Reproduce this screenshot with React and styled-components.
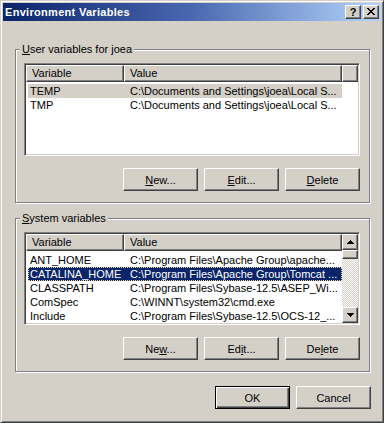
import React from 'react';
import styled, {createGlobalStyle, css} from 'styled-components';

const face = '#d4d0c8';

const GlobalStyle = createGlobalStyle`
    html, body {
        margin: 0;
        padding: 0;
        background: ${face};
    }
    body {
        font-family: "Liberation Sans", Arial, sans-serif;
        font-size: 11px;
        color: #000;
    }
    * {
        box-sizing: border-box;
    }
`

const raised = css`
    border: 1px solid;
    border-color: #fff #404040 #404040 #fff;
    box-shadow: inset -1px -1px #808080, inset 1px 1px ${face};
`

const Window = styled.div`
    width: 384px;
    height: 423px;
    background: ${face};
    border: 1px solid;
    border-color: ${face} #404040 #404040 ${face};
    box-shadow: inset 1px 1px #fff, inset -1px -1px #808080;
    padding: 2px;
    display: flex;
    flex-direction: column;
`

const TitleBar = styled.div`
    height: 18px;
    display: flex;
    align-items: center;
    gap: 2px;
    padding: 0 2px 0 2px;
    background: linear-gradient(to right, #0a246a 0%, #4a68b0 50%, #b4d6fc 100%);
`

const Title = styled.div`
    flex: 1;
    color: #fff;
    font-weight: bold;
    font-size: 11px;
    letter-spacing: 0.3px;
    line-height: 18px;
    white-space: nowrap;
`

const CaptionButton = styled.div`
    ${raised};
    width: 16px;
    height: 14px;
    background: ${face};
    display: flex;
    align-items: center;
    justify-content: center;
    font-weight: bold;
    font-size: 11px;
    line-height: 12px;
    padding-bottom: 1px;
`

const Content = styled.div`
    flex: 1;
    padding: 28px 11px 0 12px;
    display: flex;
    flex-direction: column;
`

const Group = styled.div`
    position: relative;
    height: 154px;
    border: 1px solid #808080;
    box-shadow: inset 1px 1px #fff, 1px 1px #fff;
    padding: 13px 9px 11px 8px;
    margin-bottom: ${props => props.$gap}px;
`

const Legend = styled.span`
    position: absolute;
    top: -7px;
    left: 4px;
    padding: 0 2px;
    line-height: 13px;
    background: ${face};
`

const ListView = styled.div`
    height: 93px;
    border: 1px solid;
    border-color: #808080 #fff #fff #808080;
    box-shadow: inset 1px 1px #404040, inset -1px -1px ${face};
    padding: 1px;
    background: #fff;
    display: flex;
    overflow: hidden;
`

const ListBody = styled.div`
    flex: 1;
    display: flex;
    flex-direction: column;
    min-width: 0;
`

const Header = styled.div`
    display: flex;
    height: 17px;
    flex-shrink: 0;
`

const HeaderCell = styled.div`
    ${raised};
    background: ${face};
    width: ${props => props.$width ? `${props.$width}px` : 'auto'};
    flex: ${props => props.$width ? 'none' : 1};
    padding-left: 5px;
    line-height: 15px;
    white-space: nowrap;
`

const Rows = styled.div`
    padding-top: 2px;
`

const Row = styled.div`
    display: flex;
    width: 314px;
    height: 14px;
    margin-left: 2px;
    line-height: 14px;
    white-space: nowrap;
    ${props => props.$state === 'active' && css`
        background: #0a246a;
        color: #fff;
        outline: 1px dotted #f5db95;
        outline-offset: -1px;
    `}
    ${props => props.$state === 'inactive' && css`
        background: ${face};
    `}
`

const NameCell = styled.div`
    width: 96px;
    padding-left: 2px;
    overflow: hidden;
`

const ValueCell = styled.div`
    flex: 1;
    padding-left: 6px;
    overflow: hidden;
`

const ScrollBar = styled.div`
    width: 16px;
    display: flex;
    flex-direction: column;
`

const ScrollButton = styled.div`
    ${raised};
    width: 16px;
    height: ${props => props.$height}px;
    flex-shrink: 0;
    background: ${face};
    display: flex;
    align-items: center;
    justify-content: center;
`

const Track = styled.div`
    flex: 1;
    background-image: conic-gradient(#fff 0 25%, ${face} 0 50%, #fff 0 75%, ${face} 0);
    background-size: 2px 2px;
`

const ButtonRow = styled.div`
    display: flex;
    justify-content: flex-end;
    gap: 6px;
    margin-top: ${props => props.$top}px;
    margin-right: ${props => props.$right || 0}px;
`

const Button = styled.button`
    ${raised};
    width: 75px;
    height: 23px;
    padding: 0;
    font: inherit;
    color: #000;
    background: ${face};
    ${props => props.$default && css`
        border-color: #000;
        box-shadow: inset 1px 1px #fff, inset -1px -1px #404040, inset -2px -2px #808080;
    `}
    u {
        text-decoration-thickness: 1px;
        text-underline-offset: 1px;
    }
`

const Arrow = ({up}) => (
    <svg width="7" height="4" viewBox="0 0 7 4" shapeRendering="crispEdges">
        {up
            ? <path d="M3 0h1v1h1v1h1v1h1v1H0V3h1V2h1V1h1z" fill="#000"/>
            : <path d="M0 0h7v1H6v1H5v1H4v1H3V3H2V2H1V1H0z" fill="#000"/>}
    </svg>
);

const CloseGlyph = () => (
    <svg width="8" height="7" viewBox="0 0 8 7" shapeRendering="crispEdges">
        <path d="M0 0h2v1h1v1h2V1h1V0h2v1H7v1H6v1H5v1h1v1h1v1h1v1H6V6H5V5H3v1H2v1H0V6h1V5h1V4h1V3H2V2H1V1H0z" fill="#000"/>
    </svg>
);

const userVars = [
    {name: 'TEMP', value: 'C:\\Documents and Settings\\joea\\Local S...', state: 'inactive'},
    {name: 'TMP', value: 'C:\\Documents and Settings\\joea\\Local S...'},
];

const systemVars = [
    {name: 'ANT_HOME', value: 'C:\\Program Files\\Apache Group\\apache...'},
    {name: 'CATALINA_HOME', value: 'C:\\Program Files\\Apache Group\\Tomcat ...', state: 'active'},
    {name: 'CLASSPATH', value: 'C:\\Program Files\\Sybase-12.5\\ASEP_Wi...'},
    {name: 'ComSpec', value: 'C:\\WINNT\\system32\\cmd.exe'},
    {name: 'Include', value: 'C:\\Program Files\\Sybase-12.5\\OCS-12_...'},
];

const VarList = ({vars, scroll}) => (
    <ListView>
        <ListBody>
            <Header>
                <HeaderCell $width={98}>Variable</HeaderCell>
                {scroll
                    ? <HeaderCell>Value</HeaderCell>
                    : <>
                        <HeaderCell $width={218}>Value</HeaderCell>
                        <HeaderCell/>
                    </>}
            </Header>
            <Rows>
                {vars.map((v) => (
                    <Row key={v.name} $state={v.state}>
                        <NameCell>{v.name}</NameCell>
                        <ValueCell>{v.value}</ValueCell>
                    </Row>
                ))}
            </Rows>
        </ListBody>
        {scroll && (
            <ScrollBar>
                <ScrollButton $height={16}><Arrow up/></ScrollButton>
                <ScrollButton $height={9}/>
                <Track/>
                <ScrollButton $height={16}><Arrow/></ScrollButton>
            </ScrollBar>
        )}
    </ListView>
);

const App = () => {
    return (
        <>
            <GlobalStyle/>
            <Window>
                <TitleBar>
                    <Title>Environment Variables</Title>
                    <CaptionButton>?</CaptionButton>
                    <CaptionButton><CloseGlyph/></CaptionButton>
                </TitleBar>
                <Content>
                    <Group $gap={15}>
                        <Legend><u>U</u>ser variables for joea</Legend>
                        <VarList vars={userVars}/>
                        <ButtonRow $top={12}>
                            <Button><u>N</u>ew...</Button>
                            <Button><u>E</u>dit...</Button>
                            <Button><u>D</u>elete</Button>
                        </ButtonRow>
                    </Group>
                    <Group $gap={0}>
                        <Legend><u>S</u>ystem variables</Legend>
                        <VarList vars={systemVars} scroll/>
                        <ButtonRow $top={12}>
                            <Button>Ne<u>w</u>...</Button>
                            <Button>Ed<u>i</u>t...</Button>
                            <Button>De<u>l</u>ete</Button>
                        </ButtonRow>
                    </Group>
                    <ButtonRow $top={14} $right={-1}>
                        <Button $default>OK</Button>
                        <Button>Cancel</Button>
                    </ButtonRow>
                </Content>
            </Window>
        </>
    );
};

export default App;
